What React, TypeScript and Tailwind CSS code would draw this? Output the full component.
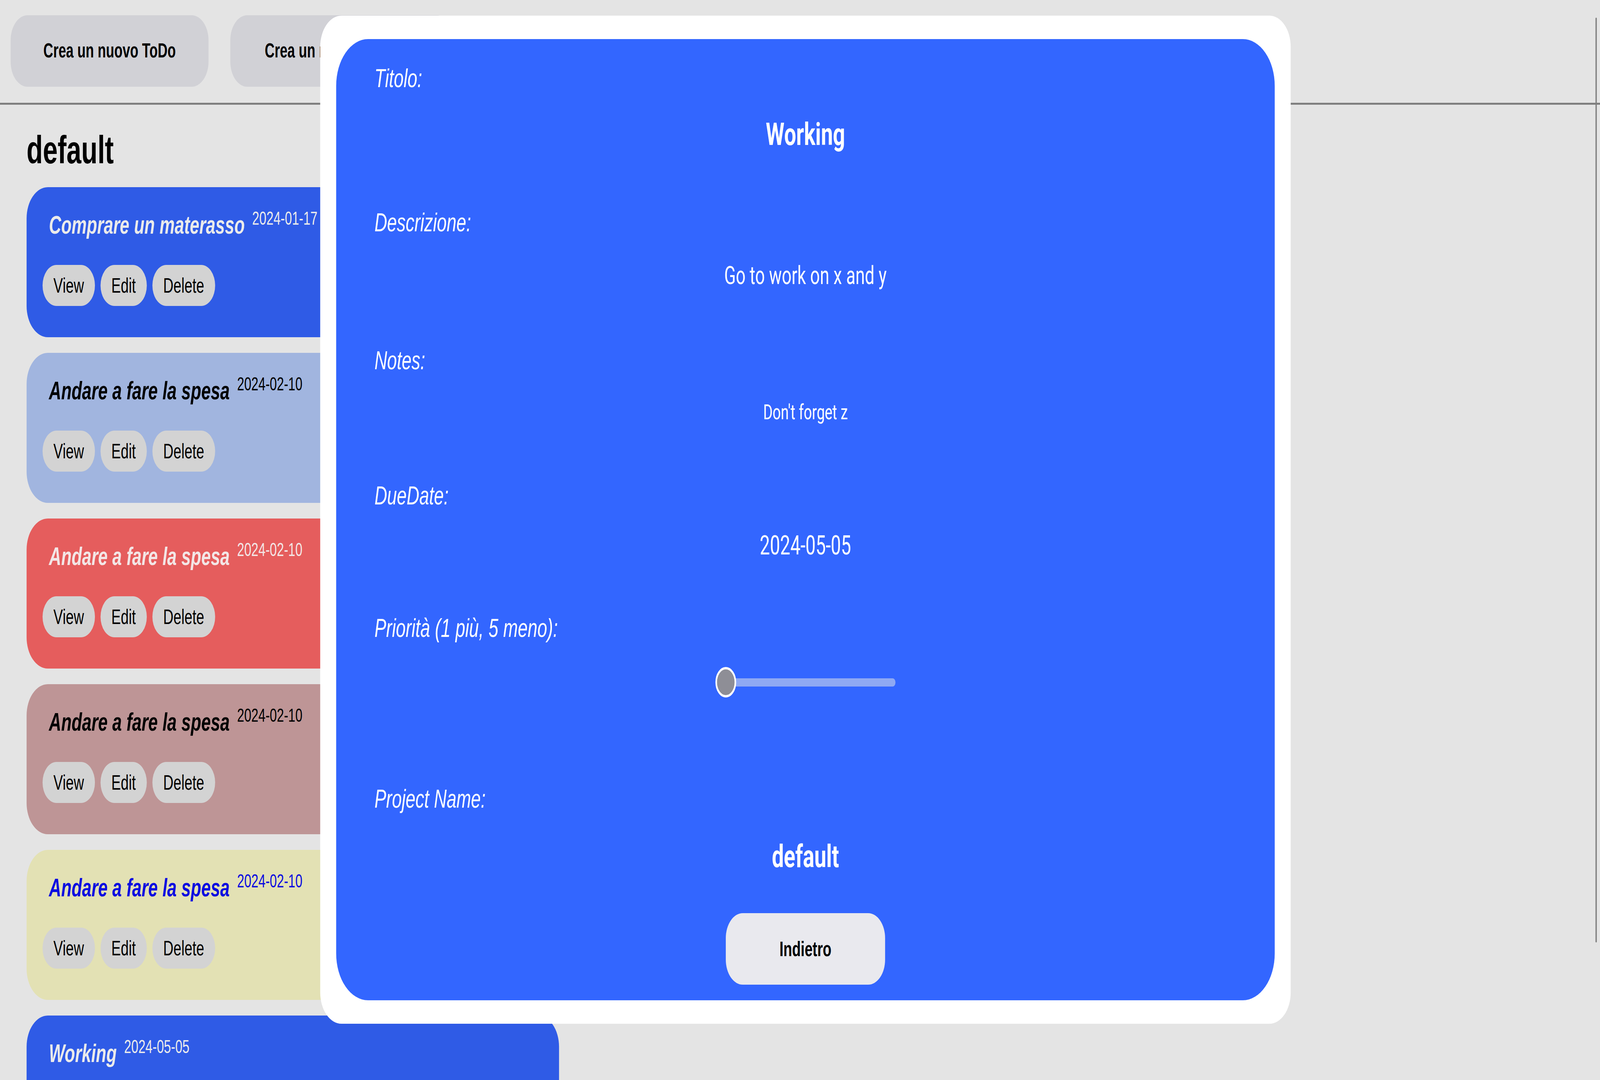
import React, { useEffect, useState } from 'react';

interface Todo {
  title: string;
  date: string;
  bg: string;
  text: string;
}

const TODOS: Todo[] = [
  { title: 'Comprare un materasso', date: '2024-01-17', bg: 'bg-[#2f5be6]', text: 'text-[#ebebeb]' },
  { title: 'Andare a fare la spesa', date: '2024-02-10', bg: 'bg-[#a1b5df]', text: 'text-black' },
  { title: 'Andare a fare la spesa', date: '2024-02-10', bg: 'bg-[#e55d5d]', text: 'text-[#f3e6e6]' },
  { title: 'Andare a fare la spesa', date: '2024-02-10', bg: 'bg-[#be9596]', text: 'text-black' },
  { title: 'Andare a fare la spesa', date: '2024-02-10', bg: 'bg-[#e3e1b4]', text: 'text-[#0b0be0]' },
  { title: 'Working', date: '2024-05-05', bg: 'bg-[#2f5be6]', text: 'text-[#ebebeb]' },
];

// the screen is drawn at 6016x2764 and fitted to whatever window we get
const DESIGN_W = 6016;
const DESIGN_H = 2764;

const sans = "font-['Liberation_Sans',Arial,sans-serif]";
const roboto = "font-['Roboto','Liberation_Sans',sans-serif]";

function getScale() {
  return { sx: window.innerWidth / DESIGN_W, sy: window.innerHeight / DESIGN_H };
}

function TodoCard({ todo, showActions }: { todo: Todo; showActions: boolean }) {
  return (
    <div className={`w-[2002px] h-[384px] shrink-0 rounded-[80px] pt-[60px] px-[60px] pb-[80px] ${todo.bg} ${todo.text}`}>
      <div className="flex items-start ml-[24px] h-[74px]">
        <span className={`${sans} text-[64px] leading-[74px] font-bold italic whitespace-nowrap`}>{todo.title}</span>
        <span className={`${sans} text-[48px] leading-[56px] -mt-[8px] ml-[28px] whitespace-nowrap`}>{todo.date}</span>
      </div>
      {/* the last card is below the fold, its buttons are off screen */}
      {showActions && (
        <div className="flex gap-[21px] mt-[65px]">
          {['View', 'Edit', 'Delete'].map((label) => (
            <button
              key={label}
              className={`${sans} h-[105px] px-[41px] rounded-full bg-[#d3d3d3] text-black text-[53.33px] leading-none flex items-center`}
            >
              {label}
            </button>
          ))}
        </div>
      )}
    </div>
  );
}

function Label({ children }: { children: React.ReactNode }) {
  return <p className={`${sans} italic text-white text-[66px] leading-[76px]`}>{children}</p>;
}

function ViewDialog() {
  return (
    <div className="absolute left-[1204px] top-[40px] w-[3649px] h-[2580px] bg-white rounded-[80px] p-[60px]">
      <div className="h-full bg-[#3366ff] rounded-[120px] px-[144px] pt-[62px] flex flex-col text-white">
        <Label>Titolo:</Label>
        <p className={`${roboto} mt-[59px] text-center font-bold text-[80px] leading-[94px]`}>Working</p>

        <div className="mt-[140px]">
          <Label>Descrizione:</Label>
        </div>
        <p className={`${roboto} mt-[61px] text-center text-[64px] leading-[75px]`}>Go to work on x and y</p>

        <div className="mt-[141px]">
          <Label>Notes:</Label>
        </div>
        <p className={`${roboto} mt-[63px] text-center text-[54px] leading-[63px]`}>Don't forget z</p>

        <div className="mt-[144px]">
          <Label>DueDate:</Label>
        </div>
        <p className={`${roboto} mt-[50px] text-center text-[68px] leading-[80px]`}>2024-05-05</p>

        <div className="mt-[133px]">
          <Label>Priorità (1 più, 5 meno):</Label>
        </div>
        <div className="mt-[61px] h-[80px] flex justify-center">
          <div className="w-[677px] h-[80px] flex items-center">
            <div className="relative z-10 w-[78px] h-[78px] shrink-0 rounded-full bg-[#8e8e96] border-[6px] border-white" />
            <div className="flex-1 h-[21px] -ml-[39px] rounded-full bg-[#8fa9f3]" />
          </div>
        </div>

        <div className="mt-[220px]">
          <Label>Project Name:</Label>
        </div>
        <p className={`${roboto} mt-[63px] text-center font-bold text-[80px] leading-[94px]`}>default</p>

        <div className="mt-[98px] flex justify-center">
          <button className={`${sans} w-[599px] h-[183px] rounded-[64px] bg-[#e9e9ee] text-black font-bold text-[53.33px]`}>
            Indietro
          </button>
        </div>
      </div>
    </div>
  );
}

export default function App() {
  const [scale, setScale] = useState(getScale);

  useEffect(() => {
    const onResize = () => setScale(getScale());
    window.addEventListener('resize', onResize);
    return () => window.removeEventListener('resize', onResize);
  }, []);

  return (
    <div className="w-screen h-screen overflow-hidden bg-[#e4e4e4]">
      <div
        className="relative w-[6016px] h-[2764px] overflow-hidden bg-[#e4e4e4] origin-top-left"
        style={{ transform: `scale(${scale.sx}, ${scale.sy})` }}
      >
        {/* top bar */}
        <div className="flex gap-[82px] pl-[40px] pt-[39px] pb-[41px]">
          <button className={`${sans} w-[744px] h-[183px] rounded-[64px] bg-[#d1d1d6] text-black font-bold text-[51px]`}>
            Crea un nuovo ToDo
          </button>
          <button className={`${sans} w-[840px] h-[183px] rounded-[64px] bg-[#d1d1d6] text-black font-bold text-[51px]`}>
            Crea un nuovo Progetto
          </button>
        </div>
        <div className="h-[5px] bg-[#7f7f7f]" />

        <h2 className={`${sans} ml-[100px] mt-[60px] mb-[41px] text-[100px] leading-[110px] font-bold text-black`}>default</h2>

        <div className="flex flex-col gap-[40px] ml-[100px]">
          {TODOS.map((t, i) => (
            <TodoCard key={i} todo={t} showActions={i < TODOS.length - 1} />
          ))}
        </div>

        {/* scrollbar thumb */}
        <div className="absolute left-[5999px] top-[45px] w-[5px] h-[2367px] rounded-full bg-[#7f7f7f]" />

        <ViewDialog />
      </div>
    </div>
  );
}
